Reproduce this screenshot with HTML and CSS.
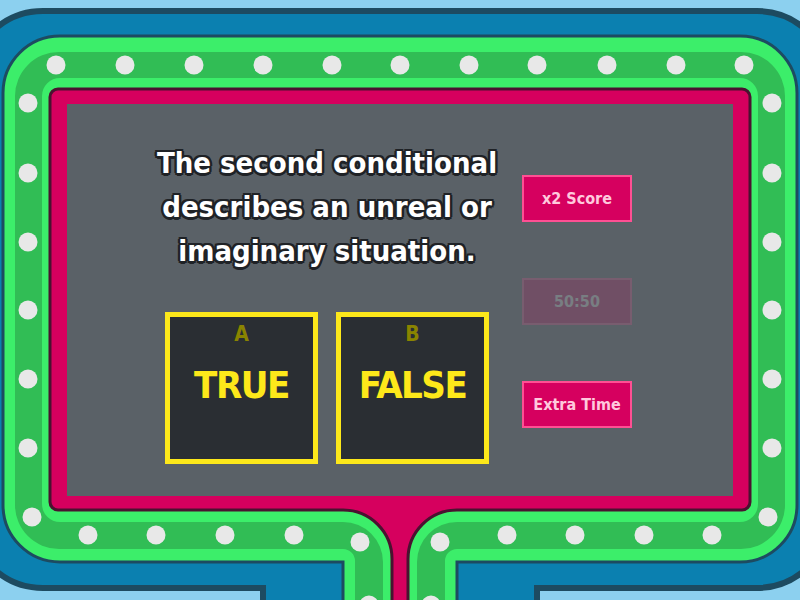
FILE: index.html
```html
<!DOCTYPE html>
<html lang="en">
<head>
<meta charset="utf-8">
<title>Gameshow quiz</title>
<link rel="stylesheet" href="styles.css">
</head>
<body>
<div class="stage">
  <svg class="frame" width="800" height="600" viewBox="0 0 800 600" aria-hidden="true">
    <path class="blue" d="M43,11 H757 A73 73 0 0 1 830,84 V515 A73 73 0 0 1 757,588 H537 V640 H263 V588 H43 A73 73 0 0 1 -30,515 V84 A73 73 0 0 1 43,11 Z"/>
    <path class="green-light outer" d="M60,36 H740 A57 57 0 0 1 797,93 V505 A57 57 0 0 1 740,562 H457 V640 H343 V562 H60 A57 57 0 0 1 3,505 V93 A57 57 0 0 1 60,36 Z"/>
    <path class="green-dark" d="M59,52 H741 A44 44 0 0 1 785,96 V505 A44 44 0 0 1 741,549 H457 A12 12 0 0 0 445,561 V640 H355 V561 A12 12 0 0 0 343,549 H59 A44 44 0 0 1 15,505 V96 A44 44 0 0 1 59,52 Z"/>
    <path class="green-light" d="M60,78 H740 A18 18 0 0 1 758,96 V504 A18 18 0 0 1 740,522 H457 A40 40 0 0 0 417,562 V640 H383 V562 A40 40 0 0 0 343,522 H60 A18 18 0 0 1 42,504 V96 A18 18 0 0 1 60,78 Z"/>
    <path class="pink" d="M58,89 H742 A8 8 0 0 1 750,97 V502 A8 8 0 0 1 742,510 H457 A49 49 0 0 0 408,559 V640 H392 V559 A49 49 0 0 0 343,510 H58 A8 8 0 0 1 50,502 V97 A8 8 0 0 1 58,89 Z"/>
    <g class="dots">
      <circle cx="56" cy="65" r="9.5"/><circle cx="125" cy="65" r="9.5"/><circle cx="194" cy="65" r="9.5"/><circle cx="263" cy="65" r="9.5"/><circle cx="332" cy="65" r="9.5"/><circle cx="400" cy="65" r="9.5"/><circle cx="469" cy="65" r="9.5"/><circle cx="537" cy="65" r="9.5"/><circle cx="607" cy="65" r="9.5"/><circle cx="676" cy="65" r="9.5"/><circle cx="744" cy="65" r="9.5"/>
      <circle cx="28" cy="103" r="9.5"/><circle cx="28" cy="173" r="9.5"/><circle cx="28" cy="242" r="9.5"/><circle cx="28" cy="310" r="9.5"/><circle cx="28" cy="379" r="9.5"/><circle cx="28" cy="448" r="9.5"/><circle cx="32" cy="517" r="9.5"/>
      <circle cx="772" cy="103" r="9.5"/><circle cx="772" cy="173" r="9.5"/><circle cx="772" cy="242" r="9.5"/><circle cx="772" cy="310" r="9.5"/><circle cx="772" cy="379" r="9.5"/><circle cx="772" cy="448" r="9.5"/><circle cx="768" cy="517" r="9.5"/>
      <circle cx="88" cy="535" r="9.5"/><circle cx="156" cy="535" r="9.5"/><circle cx="225" cy="535" r="9.5"/><circle cx="294" cy="535" r="9.5"/><circle cx="360" cy="542" r="9.5"/><circle cx="369" cy="605" r="9.5"/>
      <circle cx="440" cy="542" r="9.5"/><circle cx="507" cy="535" r="9.5"/><circle cx="575" cy="535" r="9.5"/><circle cx="644" cy="535" r="9.5"/><circle cx="712" cy="535" r="9.5"/><circle cx="431" cy="605" r="9.5"/>
    </g>
  </svg>

  <main class="panel">
    <section class="quiz">
      <p class="question">The second conditional<br>describes an unreal or<br>imaginary situation.</p>
      <div class="answers">
        <div class="answer"><span class="key">A</span><span class="label">TRUE</span></div>
        <div class="answer"><span class="key">B</span><span class="label">FALSE</span></div>
      </div>
    </section>
    <aside class="powerups">
      <button class="power">x2 Score</button>
      <button class="power used">50:50</button>
      <button class="power">Extra Time</button>
    </aside>
  </main>
</div>
</body>
</html>
```

FILE: styles.css
```css
html, body {
  margin: 0;
  padding: 0;
}

body {
  background: #8cd0ef;
  font-family: "DejaVu Sans Condensed", "DejaVu Sans", sans-serif;
}

.stage {
  position: relative;
  width: 800px;
  height: 600px;
  overflow: hidden;
  box-sizing: border-box;
  padding: 104px 67px 0 67px;
  background: #8cd0ef;
}

.frame {
  position: absolute;
  left: 0;
  top: 0;
  display: block;
}

.frame .blue {
  fill: #0b80b0;
  stroke: #1d4b61;
  stroke-width: 6;
}

.frame .green-light {
  fill: #3cee6a;
}

.frame .green-light.outer {
  stroke: #1d4b61;
  stroke-width: 3;
}

.frame .green-dark {
  fill: #31bd55;
}

.frame .pink {
  fill: #d6005e;
  stroke: #4a1230;
  stroke-width: 3;
}

.frame .dots circle {
  fill: #e8e8e8;
}

.panel {
  position: relative;
  height: 392px;
  background: #5a6167;
  display: grid;
  grid-template-columns: 368px 110px;
  column-gap: 11px;
  padding-left: 76px;
  box-sizing: border-box;
}

.quiz {
  display: flex;
  flex-direction: column;
  align-items: center;
}

.question {
  margin: 37px 0 0 0;
  font-weight: bold;
  font-stretch: condensed;
  font-size: 29px;
  line-height: 44px;
  color: #ffffff;
  text-align: center;
  white-space: nowrap;
  text-shadow:
    2.5px 0 0 #1f2226, -2.5px 0 0 #1f2226, 0 2.5px 0 #1f2226, 0 -2.5px 0 #1f2226,
    1.8px 1.8px 0 #1f2226, -1.8px 1.8px 0 #1f2226, 1.8px -1.8px 0 #1f2226, -1.8px -1.8px 0 #1f2226;
}

.answers {
  margin-top: 39px;
  display: flex;
  gap: 18px;
}

.answer {
  width: 153px;
  height: 152px;
  box-sizing: border-box;
  border: 5px solid #fde81a;
  background: #2a2e33;
  display: flex;
  flex-direction: column;
  align-items: center;
  padding-top: 5px;
}

.key {
  font-weight: bold;
  font-size: 21px;
  line-height: 24px;
  color: #8a8400;
}

.label {
  margin-top: 17px;
  font-weight: bold;
  font-size: 38px;
  line-height: 44px;
  letter-spacing: -1.5px;
  color: #fde81a;
}

.powerups {
  display: flex;
  flex-direction: column;
  gap: 56px;
  padding-top: 71px;
}

.power {
  width: 110px;
  height: 47px;
  box-sizing: border-box;
  border: 2px solid #ff4f93;
  background: #d6005f;
  color: #ffc9dd;
  font-family: "DejaVu Sans Condensed", "DejaVu Sans", sans-serif;
  font-weight: bold;
  font-stretch: condensed;
  font-size: 16px;
  padding: 0;
  margin: 0;
}

.power.used {
  opacity: 0.18;
  color: #ffffff;
}
```
